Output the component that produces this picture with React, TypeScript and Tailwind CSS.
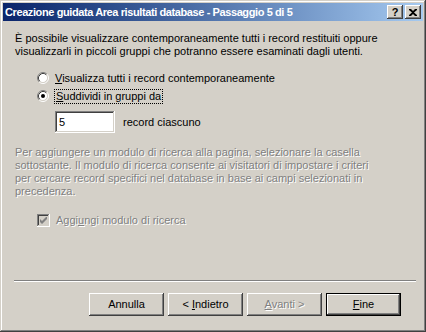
import React from "react";

const raised =
  "shadow-[inset_-1px_-1px_#404040,inset_1px_1px_#ffffff,inset_-2px_-2px_#808080,inset_2px_2px_#d4d0c8]";
const sunken =
  "shadow-[inset_-1px_-1px_#ffffff,inset_1px_1px_#808080,inset_-2px_-2px_#d4d0c8,inset_2px_2px_#404040]";
const disabledText = "text-[#808080] [text-shadow:1px_1px_0_#ffffff]";

const Radio: React.FC<{ checked?: boolean }> = ({ checked }) => (
  <svg width="12" height="12" viewBox="0 0 12 12" className="shrink-0">
    <circle cx="6" cy="6" r="4.5" fill="#ffffff" />
    <path d="M2.11 9.89 A5.5 5.5 0 0 1 9.89 2.11" fill="none" stroke="#808080" strokeWidth="1" />
    <path d="M9.89 2.11 A5.5 5.5 0 0 1 2.11 9.89" fill="none" stroke="#ffffff" strokeWidth="1" />
    <path d="M2.82 9.18 A4.5 4.5 0 0 1 9.18 2.82" fill="none" stroke="#404040" strokeWidth="1" />
    <path d="M9.18 2.82 A4.5 4.5 0 0 1 2.82 9.18" fill="none" stroke="#d4d0c8" strokeWidth="1" />
    {checked && <circle cx="6" cy="6" r="2" fill="#000000" />}
  </svg>
);

const WizardButton: React.FC<{
  children: React.ReactNode;
  disabled?: boolean;
  isDefault?: boolean;
}> = ({ children, disabled, isDefault }) => (
  <div
    className={
      "w-[75px] h-[23px] flex items-center justify-center bg-[#d4d0c8] " +
      (isDefault
        ? "border border-black shadow-[inset_-1px_-1px_#404040,inset_1px_1px_#ffffff,inset_-2px_-2px_#808080]"
        : raised) +
      (disabled ? " " + disabledText : " text-black")
    }
  >
    <span className="whitespace-pre">{children}</span>
  </div>
);

export default function App() {
  return (
    <div
      className={
        "w-[426px] h-[332px] bg-[#d4d0c8] p-[3px] flex flex-col text-[11px] leading-[13px] text-black " +
        "shadow-[inset_-1px_-1px_#404040,inset_1px_1px_#d4d0c8,inset_-2px_-2px_#808080,inset_2px_2px_#ffffff]"
      }
      style={{ fontFamily: '"Liberation Sans", Arial, sans-serif' }}
    >
      {/* title bar */}
      <div className="h-[18px] flex items-center pl-[2px] pr-[2px] bg-gradient-to-r from-[#0a246a] to-[#a6caf0]">
        <span className="text-white font-bold text-[11px] tracking-[-0.4px] whitespace-nowrap">
          Creazione guidata Area risultati database - Passaggio 5 di 5
        </span>
        <div className="ml-auto flex gap-[2px]">
          <div className={"w-[16px] h-[14px] bg-[#d4d0c8] flex items-center justify-center font-bold text-[11px] leading-none " + raised}>
            ?
          </div>
          <div className={"w-[16px] h-[14px] bg-[#d4d0c8] flex items-center justify-center " + raised}>
            <svg width="8" height="7" viewBox="0 0 8 7">
              <path d="M0 0h2l2 2 2-2h2v1L5 3.5 8 6v1H6L4 5 2 7H0V6l3-2.5L0 1z" fill="#000000" />
            </svg>
          </div>
        </div>
      </div>

      {/* body */}
      <div className="flex-1 flex flex-col">
        <p className="mt-[11px] ml-[12px] whitespace-nowrap">
          È possibile visualizzare contemporaneamente tutti i record restituiti oppure
          <br />
          visualizzarli in piccoli gruppi che potranno essere esaminati dagli utenti.
        </p>

        <div className="mt-[12px] ml-[34px] h-[16px] flex items-center gap-[6px]">
          <Radio />
          <span className="whitespace-nowrap">
            <u>V</u>isualizza tutti i record contemporaneamente
          </span>
        </div>
        <div className="mt-[2px] ml-[34px] h-[16px] flex items-center gap-[5px]">
          <Radio checked />
          <span className="whitespace-nowrap border border-dotted border-black px-[1px] leading-[13px]">
            <u>S</u>uddividi in gruppi da
          </span>
        </div>

        <div className="mt-[7px] ml-[52px] flex items-center gap-[8px]">
          <div className={"w-[60px] h-[22px] bg-white flex items-center pl-[4px] " + sunken}>5</div>
          <span>record ciascuno</span>
        </div>

        <p className={"mt-[13px] ml-[12px] whitespace-nowrap " + disabledText}>
          Per aggiungere un modulo di ricerca alla pagina, selezionare la casella
          <br />
          sottostante. Il modulo di ricerca consente ai visitatori di impostare i criteri
          <br />
          per cercare record specifici nel database in base ai campi selezionati in
          <br />
          precedenza.
        </p>

        <div className="mt-[14px] ml-[34px] h-[16px] flex items-center gap-[6px]">
          <div className={"w-[13px] h-[13px] bg-[#d4d0c8] flex items-center justify-center " + sunken}>
            <svg width="7" height="7" viewBox="0 0 7 7">
              <path d="M0 2v3l2 2 5-5V-1L2 4z" fill="#808080" />
            </svg>
          </div>
          <span className={"whitespace-nowrap " + disabledText}>
            Aggi<u>u</u>ngi modulo di ricerca
          </span>
        </div>

        {/* footer */}
        <div className="mt-auto ml-[11px] mr-[7px] h-[2px] border-t border-t-[#808080] border-b border-b-white" />
        <div className="mt-[11px] mb-[13px] pr-[22px] flex justify-end gap-[4px]">
          <WizardButton>Annulla</WizardButton>
          <WizardButton>
            {"< "}
            <u>I</u>ndietro
          </WizardButton>
          <WizardButton disabled>
            <u>A</u>
            {"vanti >"}
          </WizardButton>
          <WizardButton isDefault>
            <u>F</u>ine
          </WizardButton>
        </div>
      </div>
    </div>
  );
}
